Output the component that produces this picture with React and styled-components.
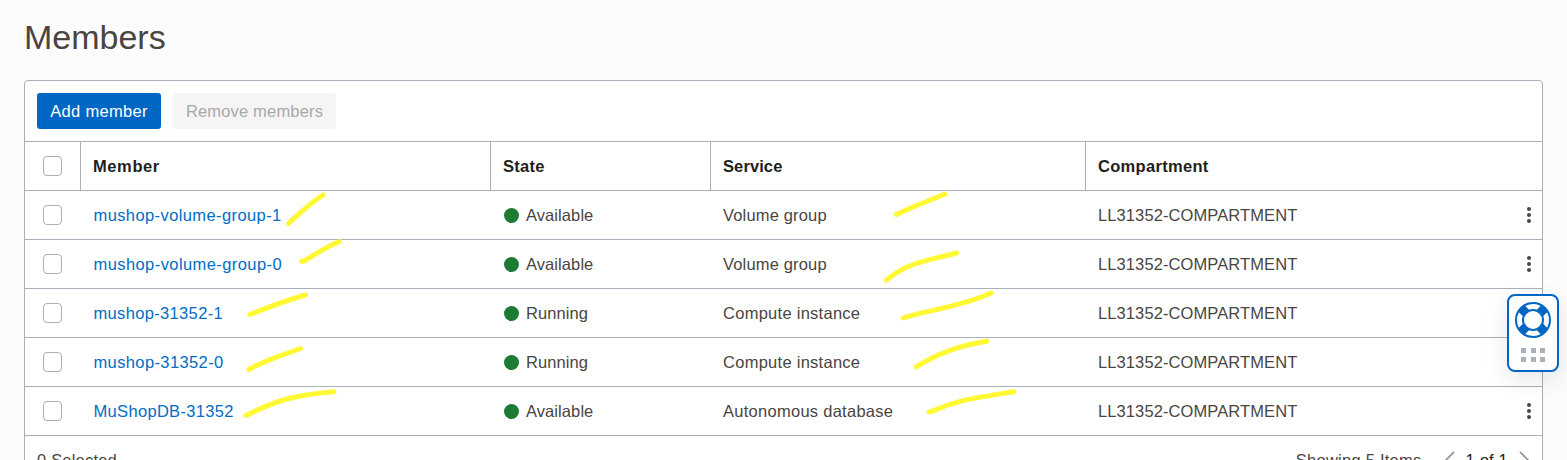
import React from "react";
import styled, { createGlobalStyle } from "styled-components";

const Global = createGlobalStyle`
  html, body { margin: 0; padding: 0; overflow: hidden; }
  *, *::before, *::after { box-sizing: border-box; }
`;

const line = "#a8b0b9";

const Page = styled.main`
  position: relative;
  width: 1567px;
  height: 460px;
  overflow: hidden;
  padding: 0 24px;
  background: #fcfcfc;
  color: #4a4541;
  font-family: "Liberation Sans", Arial, sans-serif;
  font-size: 16.5px;
`;

const Title = styled.h1`
  margin: 0;
  height: 80px;
  padding-top: 17px;
  font-size: 34px;
  font-weight: 400;
  line-height: 40px;
`;

const Panel = styled.section`
  width: 1519px;
  border: 1px solid ${line};
  border-radius: 4px;
  background: #fff;
`;

const Toolbar = styled.div`
  display: flex;
  gap: 12px;
  padding: 12px;
  height: 61px;
  border-bottom: 1px solid ${line};
`;

const Button = styled.button`
  width: ${(p) => p.$width}px;
  height: 36px;
  padding: 0;
  border: 0;
  border-radius: 3px;
  font: inherit;
  line-height: 36px;
  letter-spacing: ${(p) => p.$ls}px;
  background: ${(p) => (p.$primary ? "#0067c5" : "#f5f5f5")};
  color: ${(p) => (p.$primary ? "#fff" : "#a9a8a7")};
`;

const Row = styled.div`
  display: grid;
  grid-template-columns: 56px 410px 220px 375px 1fr;
  height: 49px;
  border-bottom: 1px solid ${line};
`;

const Cell = styled.div`
  display: flex;
  align-items: center;
  padding: 0 11px 0 12px;
  white-space: nowrap;
`;

const HeadCell = styled(Cell)`
  color: #1f1e1d;
  font-weight: 700;
  letter-spacing: ${(p) => p.$ls || 0}px;
  border-right: ${(p) => (p.$last ? "0" : `1px solid ${line}`)};
`;

const CheckCell = styled(Cell)`
  padding: 0 0 0 18px;
  border-right: ${(p) => (p.$head ? `1px solid ${line}` : "0")};
`;

const Checkbox = styled.span`
  width: 19px;
  height: 20px;
  border: 1px solid #a9b0b9;
  border-radius: 4px;
  background: #fff;
`;

const Text = styled.span`
  letter-spacing: ${(p) => p.$ls || 0}px;
`;

const Link = styled.a`
  margin-left: 0.5px;
  color: #006dc7;
  letter-spacing: ${(p) => p.$ls || 0}px;
`;

const Dot = styled.span`
  width: 15px;
  height: 15px;
  margin: 0 7px 0 1px;
  border-radius: 50%;
  background: #1e7b34;
`;

const LastCell = styled(Cell)`
  justify-content: space-between;
`;

const Kebab = styled.span`
  display: flex;
  flex-direction: column;
  gap: 2.2px;
  &::before, &::after, i { content: ""; width: 4px; height: 4px; border-radius: 50%; background: #4a4541; }
`;

const Footer = styled.div`
  display: flex;
  align-items: center;
  height: 49px;
  padding: 0 11px 0 12px;
`;

const Showing = styled.span`
  margin-left: auto;
  margin-right: 21px;
  letter-spacing: 0.25px;
`;

const PageCount = styled.span`
  margin: 0 11px;
  color: #1f1e1d;
  letter-spacing: 0.2px;
`;

const Marks = styled.svg`
  position: absolute;
  inset: 0;
  pointer-events: none;
`;

const Help = styled.aside`
  position: absolute;
  left: 1507px;
  top: 294px;
  width: 52px;
  height: 78px;
  display: flex;
  flex-direction: column;
  align-items: center;
  padding-top: 5px;
  border: 2px solid #0067c5;
  border-radius: 8px;
  background: #fff;
  box-shadow: 0 8px 24px rgba(0, 0, 0, 0.1);
`;

const Grip = styled.div`
  display: grid;
  grid-template-columns: repeat(3, 5px);
  grid-auto-rows: 5px;
  column-gap: 4.6px;
  row-gap: 4.4px;
  margin-top: 9px;
  i { background: #aab1ba; }
`;

const rows = [
  { name: "mushop-volume-group-1", state: "Available", service: "Volume group", ls: 0.4, sls: 0.16 },
  { name: "mushop-volume-group-0", state: "Available", service: "Volume group", ls: 0.42, sls: 0.16 },
  { name: "mushop-31352-1", state: "Running", service: "Compute instance", ls: 0.34, sls: 0.27 },
  { name: "mushop-31352-0", state: "Running", service: "Compute instance", ls: 0.38, sls: 0.27 },
  { name: "MuShopDB-31352", state: "Available", service: "Autonomous database", ls: 0.32, sls: 0.27 },
];

const strokes = [
  "M288.5 223.5C300 213 309 204 323 195",
  "M301.5 261.2H304C315 254 326 247 339.5 241.5",
  "M250 314.5C269 307 287 300 305.5 295",
  "M249 369.5C265 360 283 355 300.5 348.5",
  "M246 415.5C277 400 295 395 334 391.7",
  "M896.5 214.5C911 207 929 201 945 194",
  "M886.5 280C908 262 927 261 956.5 253",
  "M903 318C924 311 964 306 991 293",
  "M916 367C938 353 961 345 987 341.2",
  "M929 411.8H931C957 400 974 398 1014 391.7",
];

function LifeBuoy() {
  return (
    <svg width="38" height="38" viewBox="-19 -19 38 38" fill="none" stroke="#0067c5">
      <path d="M-12.2 -12.2L12.2 12.2M12.2 -12.2L-12.2 12.2" strokeWidth="9" />
      <circle r="17" strokeWidth="2" />
      <circle r="10" strokeWidth="2" fill="#fff" />
    </svg>
  );
}

function Chevron({ d }) {
  return (
    <svg width="12" height="20" viewBox="0 0 12 20" fill="none" stroke="#9b9a99" strokeWidth="1.8">
      <path d={d} />
    </svg>
  );
}

export default function App() {
  return (
    <Page>
      <Global />
      <Title>Members</Title>
      <Panel>
        <Toolbar>
          <Button $primary $width={124} $ls={0.3}>Add member</Button>
          <Button disabled $width={163} $ls={0.17}>Remove members</Button>
        </Toolbar>
        <Row>
          <CheckCell $head><Checkbox /></CheckCell>
          <HeadCell $ls={0.6}>Member</HeadCell>
          <HeadCell $ls={0.3}>State</HeadCell>
          <HeadCell $ls={0.1}>Service</HeadCell>
          <HeadCell $last $ls={0.3}>Compartment</HeadCell>
        </Row>
        {rows.map(({ name, state, service, ls, sls }) => (
          <Row key={name}>
            <CheckCell><Checkbox /></CheckCell>
            <Cell><Link $ls={ls}>{name}</Link></Cell>
            <Cell><Dot /><Text $ls={0.08}>{state}</Text></Cell>
            <Cell><Text $ls={sls}>{service}</Text></Cell>
            <LastCell><Text $ls={0.1}>LL31352-COMPARTMENT</Text><Kebab><i /></Kebab></LastCell>
          </Row>
        ))}
        <Footer>
          <Text $ls={0.2}>0 Selected</Text>
          <Showing>Showing 5 Items</Showing>
          <Chevron d="M11 1L2 10L11 19" />
          <PageCount>1 of 1</PageCount>
          <Chevron d="M1 1L10 10L1 19" />
        </Footer>
      </Panel>
      <Marks width="1567" height="460" fill="none" stroke="#fff833" strokeWidth="5" strokeLinecap="round">
        {strokes.map((d) => <path key={d} d={d} />)}
      </Marks>
      <Help>
        <LifeBuoy />
        <Grip>{[0, 1, 2, 3, 4, 5].map((n) => <i key={n} />)}</Grip>
      </Help>
    </Page>
  );
}
